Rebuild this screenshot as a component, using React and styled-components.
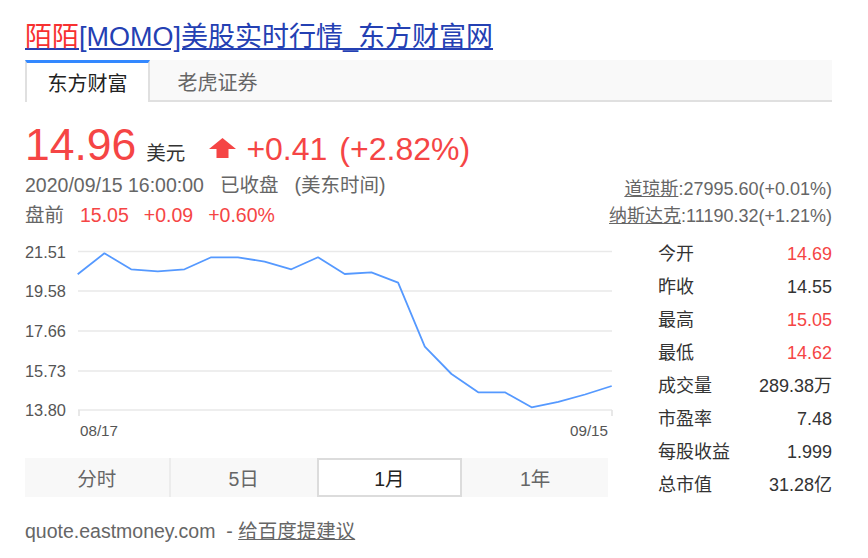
import React from "react";
import styled, { createGlobalStyle } from "styled-components";

const Global = createGlobalStyle`
  html, body { margin: 0; padding: 0; background: #fff; }
  body { font-family: "Liberation Sans", "Noto Sans CJK SC", Arial, sans-serif; }
`;

const RED = "#f54545";
const FONT = `"Liberation Sans", "Noto Sans CJK SC", sans-serif`;

const Card = styled.div`
  width: 807px;
  padding: 19px 0 0 25px;
  font-family: ${FONT};
  font-size: 19.5px;
  color: #333;
`;

const Title = styled.a`
  display: block;
  font-size: 27px;
  line-height: 36px;
  color: #2440b3;
  text-decoration: underline;
  white-space: nowrap;
`;

const Em = styled.em`
  font-style: normal;
  color: #f73131;
`;

const TabBar = styled.div`
  margin-top: 5px;
  display: flex;
  height: 40px;
  background: #f9f9f9;
  border-bottom: 2px solid #e0e0e0;
`;

const Tab = styled.div`
  box-sizing: border-box;
  width: ${(p) => p.$w}px;
  height: ${(p) => (p.$active ? 42 : 40)}px;
  display: flex;
  align-items: center;
  justify-content: center;
  font-size: 20px;
  color: ${(p) => (p.$active ? "#222" : "#666")};
  background: ${(p) => (p.$active ? "#fff" : "transparent")};
  border-top: ${(p) => (p.$active ? "3px solid #3388ff" : "none")};
  border-left: ${(p) => (p.$active ? "2px solid #e0e0e0" : "none")};
  border-right: ${(p) => (p.$active ? "2px solid #e0e0e0" : "none")};
  padding-top: ${(p) => (p.$active ? 0 : 3)}px;
`;

const TopBlock = styled.div`
  margin-top: 18px;
  display: flex;
  justify-content: space-between;
`;

const LeftInfo = styled.div`
  display: flex;
  flex-direction: column;
`;

const PriceRow = styled.div`
  display: flex;
  align-items: baseline;
  height: 50px;
  line-height: 50px;
`;

const BigPrice = styled.span`
  font-size: 44.5px;
  color: ${RED};
`;

const Unit = styled.span`
  margin-left: 10px;
  font-size: 19.5px;
  color: #333;
`;

const Arrow = styled.svg`
  margin-left: 24px;
  width: 27px;
  height: 20px;
  align-self: center;
  margin-top: 6px;
`;

const Change = styled.span`
  margin-left: ${(p) => p.$ml}px;
  font-size: 32px;
  color: ${RED};
`;

const InfoLine = styled.div`
  height: 30px;
  line-height: 30px;
  color: ${(p) => p.$color || "#666"};
  white-space: nowrap;
`;

const Part = styled.span`
  margin-left: ${(p) => p.$ml || 0}px;
  color: ${(p) => p.$color || "inherit"};
`;

const Indices = styled.div`
  align-self: flex-end;
  text-align: right;
  color: #666;
  font-size: 18px;
`;

const IndexLine = styled.div`
  height: 27px;
  line-height: 27px;
  white-space: nowrap;
`;

const U = styled.span`
  text-decoration: underline;
`;

const Lower = styled.div`
  margin-top: 8px;
  display: flex;
  gap: 43px;
`;

const ChartCol = styled.div`
  width: 590px;
  display: flex;
  flex-direction: column;
`;

const ChartSvg = styled.svg`
  display: block;
  width: 590px;
  height: 220px;
`;

const Periods = styled.div`
  width: 583px;
  height: 39px;
  display: grid;
  grid-template-columns: repeat(4, 1fr);
  background: #f8f8f8;
`;

const Period = styled.div`
  box-sizing: border-box;
  display: flex;
  align-items: center;
  justify-content: center;
  font-size: 19.5px;
  color: ${(p) => (p.$active ? "#222" : "#666")};
  background: ${(p) => (p.$active ? "#fff" : "transparent")};
  border: ${(p) => (p.$active ? "2px solid #dcdcdc" : "none")};
  border-right: ${(p) => (p.$divider ? "2px solid #ececec" : p.$active ? "2px solid #dcdcdc" : "none")};
`;

const Stats = styled.div`
  width: 174px;
  display: flex;
  flex-direction: column;
  font-size: 18px;
`;

const StatRow = styled.div`
  display: flex;
  justify-content: space-between;
  height: 33px;
  line-height: 33px;
`;

const StatLabel = styled.span`
  color: #333;
`;

const StatValue = styled.span`
  color: ${(p) => (p.$red ? RED : "#333")};
`;

const Footer = styled.div`
  margin-top: 14px;
  line-height: 30px;
  color: #666;
  white-space: pre;
`;

const FootLink = styled.a`
  color: #666;
  text-decoration: underline;
`;

const pts = [
  274.3, 253.3, 269.3, 271.3, 269.3, 257.3, 257.3, 261.7, 269.3, 257.3, 274,
  272.3, 282.7, 346.7, 374, 392.3, 392.3, 407.3, 401.8, 394.5, 386,
];

const grid = [
  { y: 251.5, label: "21.51" },
  { y: 291, label: "19.58" },
  { y: 331, label: "17.66" },
  { y: 371, label: "15.73" },
  { y: 410, label: "13.80" },
];

const stats = [
  ["今开", "14.69", true],
  ["昨收", "14.55", false],
  ["最高", "15.05", true],
  ["最低", "14.62", true],
  ["成交量", "289.38万", false],
  ["市盈率", "7.48", false],
  ["每股收益", "1.999", false],
  ["总市值", "31.28亿", false],
];

function Chart() {
  const line = pts.map((y, i) => `${(77.7 + 26.7 * i).toFixed(1)},${y}`).join(" ");
  return (
    <ChartSvg viewBox="25 238 590 220">
      {grid.map((g) => (
        <g key={g.label}>
          <line x1="78" x2="612" y1={g.y} y2={g.y} stroke="#e9e9e9" strokeWidth="1.6" />
          <text
            x="66"
            y={g.y + 6}
            textAnchor="end"
            fontSize="16.4"
            fill="#555"
            fontFamily={FONT}
          >
            {g.label}
          </text>
        </g>
      ))}
      <line x1="79" x2="79" y1="410" y2="416" stroke="#e3e3e3" strokeWidth="1.6" />
      <line x1="612" x2="612" y1="410" y2="416" stroke="#e3e3e3" strokeWidth="1.6" />
      <text x="80" y="436" fontSize="15.2" fill="#555" fontFamily={FONT}>08/17</text>
      <text x="608" y="436" textAnchor="end" fontSize="15.2" fill="#555" fontFamily={FONT}>09/15</text>
      <polyline points={line} fill="none" stroke="#5599ff" strokeWidth="1.8" strokeLinejoin="round" />
    </ChartSvg>
  );
}

export default function App() {
  return (
    <>
      <Global />
      <Card>
        <Title href="#">
          <Em>陌陌</Em>[MOMO]美股实时行情_东方财富网
        </Title>
        <TabBar>
          <Tab $active $w={125}>东方财富</Tab>
          <Tab $w={135}>老虎证券</Tab>
        </TabBar>
        <TopBlock>
          <LeftInfo>
            <PriceRow>
              <BigPrice>14.96</BigPrice>
              <Unit>美元</Unit>
              <Arrow viewBox="0 0 27 20">
                <polygon points="13.5,0 27,11 19.5,11 19.5,20 7.5,20 7.5,11 0,11" fill={RED} />
              </Arrow>
              <Change $ml={10}>+0.41</Change>
              <Change $ml={12}>(+2.82%)</Change>
            </PriceRow>
            <InfoLine>
              <Part>2020/09/15 16:00:00</Part>
              <Part $ml={16}>已收盘</Part>
              <Part $ml={16}>(美东时间)</Part>
            </InfoLine>
            <InfoLine>
              <Part>盘前</Part>
              <Part $ml={16}>
                <Part $color={RED}>15.05</Part>
              </Part>
              <Part $ml={15} $color={RED}>+0.09</Part>
              <Part $ml={15} $color={RED}>+0.60%</Part>
            </InfoLine>
          </LeftInfo>
          <Indices>
            <IndexLine>
              <U>道琼斯</U>:27995.60(+0.01%)
            </IndexLine>
            <IndexLine>
              <U>纳斯达克</U>:11190.32(+1.21%)
            </IndexLine>
          </Indices>
        </TopBlock>
        <Lower>
          <ChartCol>
            <Chart />
            <Periods>
              <Period $divider>分时</Period>
              <Period>5日</Period>
              <Period $active>1月</Period>
              <Period>1年</Period>
            </Periods>
          </ChartCol>
          <Stats>
            {stats.map(([l, v, r]) => (
              <StatRow key={l}>
                <StatLabel>{l}</StatLabel>
                <StatValue $red={r}>{v}</StatValue>
              </StatRow>
            ))}
          </Stats>
        </Lower>
        <Footer>
          quote.eastmoney.com  - <FootLink href="#">给百度提建议</FootLink>
        </Footer>
      </Card>
    </>
  );
}
